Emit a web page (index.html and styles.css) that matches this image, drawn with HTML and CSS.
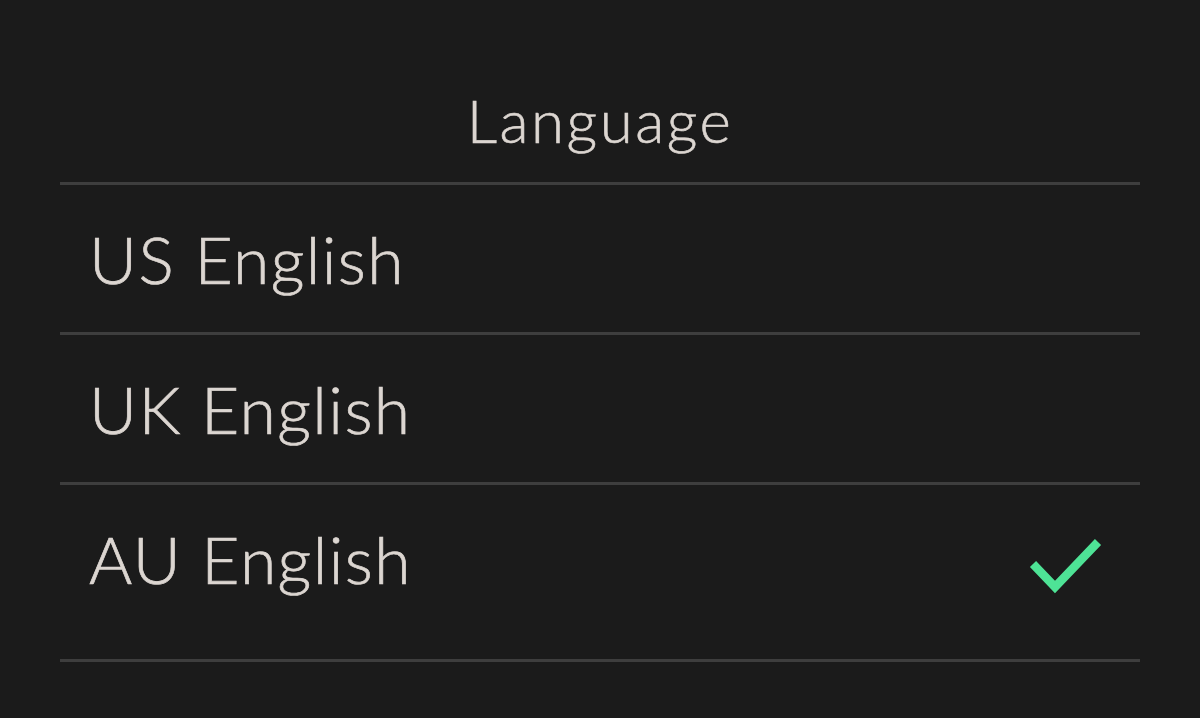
FILE: index.html
```html
<!DOCTYPE html>
<html>
<head>
<meta charset="utf-8">
<link rel="stylesheet" href="styles.css">
</head>
<body>
<div class="panel">
  <div class="header"><span class="title">Language</span></div>
  <div class="row"><span class="label">US English</span></div>
  <div class="row"><span class="label">UK English</span></div>
  <div class="row row-last">
    <span class="label">AU English</span>
    <svg class="check" width="80" height="60" viewBox="0 0 80 60">
      <polyline points="5,28 27,51 70,6" fill="none" stroke="#4ee396" stroke-width="8.5" stroke-linejoin="miter"/>
    </svg>
  </div>
</div>
</body>
</html>
```
FILE: styles.css
```css
html, body {
  margin: 0;
  padding: 0;
  background: #1b1b1b;
}
body {
  width: 1200px;
  height: 718px;
  overflow: hidden;
  font-family: Lato, "Open Sans", sans-serif;
  color: #dcd6d1;
}
.panel {
  padding: 0 60px;
}
.header {
  height: 92px;
  padding-top: 90px;
  display: flex;
  justify-content: center;
  border-bottom: 3px solid #3e3e3e;
}
.title {
  font-size: 60px;
  line-height: 60px;
  font-weight: 300;
  letter-spacing: 2.5px;
  -webkit-text-stroke: 0.6px #dcd6d1;
}
.row {
  height: 106px;
  padding: 41px 32px 0 29px;
  display: flex;
  justify-content: space-between;
  align-items: flex-start;
  border-bottom: 3px solid #3e3e3e;
}
.row-last {
  height: 133px;
}
.label {
  font-size: 66px;
  line-height: 66px;
  font-weight: 300;
  letter-spacing: 1.4px;
  -webkit-text-stroke: 0.7px #dcd6d1;
}
.check {
  margin-top: 10px;
  display: block;
}
```
